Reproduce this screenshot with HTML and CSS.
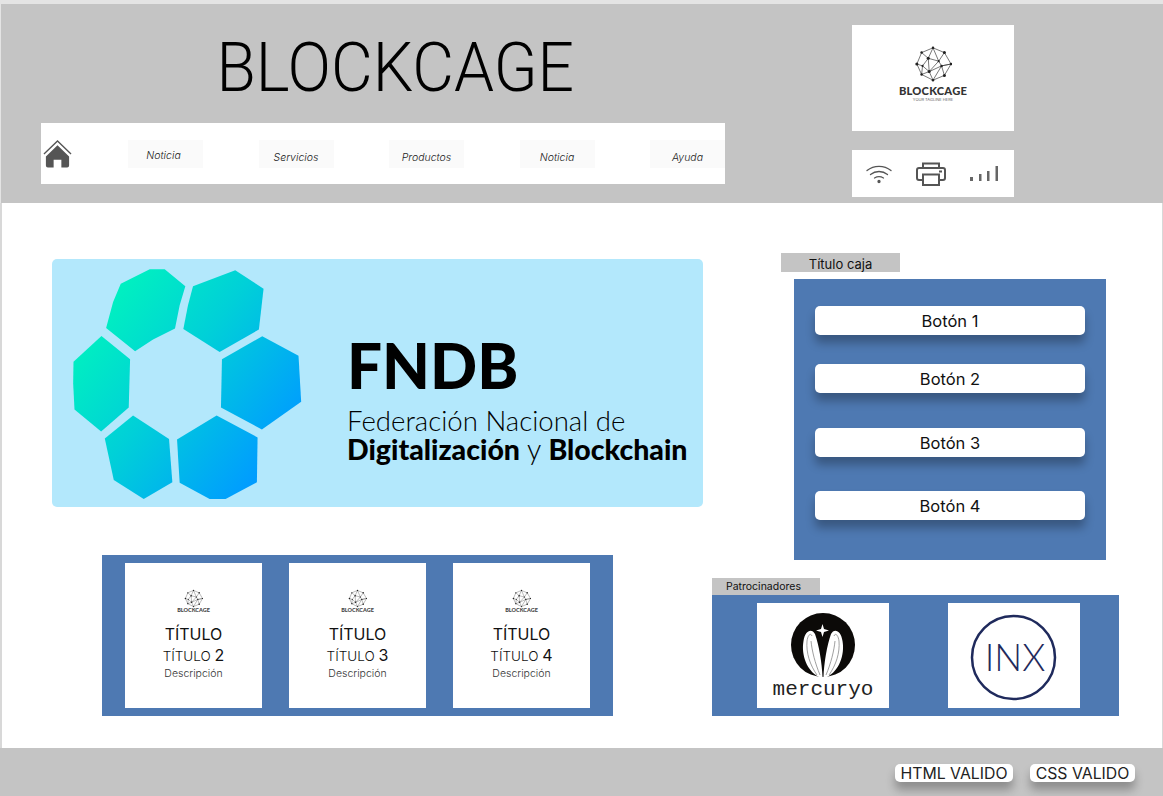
FILE: index.html
```html
<!DOCTYPE html>
<html lang="es">
<head>
    <meta charset="UTF-8">
    <meta name="viewport" content="width=device-width, initial-scale=1.0">
    <title>Blockcage</title>
    <link rel="stylesheet" href="styles.css">
</head>
<body>
    <svg class="defs" width="0" height="0">
        <symbol id="net" viewBox="-20 -20 40 40">
            <g fill="none" stroke="#333" stroke-width=".7">
                <polygon points="0,-17 12,-12 19,0 12,12 0,17 -12,11 -17,0 -12,-12"/>
                <path d="M0-17-5-6 6-3 0-17M12-12 6-3 9 2 19 0M-12-12-5-6-11 2-17 0M-5-6-4 8-11 2-12 11-4 8 0 17 9 2 12 12M6-3-4 8 9 2 19 0"/>
            </g>
            <g fill="#222">
                <circle cx="0" cy="-17" r="1.3"/><circle cx="12" cy="-12" r="1.6"/><circle cx="19" cy="0" r="1.3"/>
                <circle cx="12" cy="12" r="1.6"/><circle cx="0" cy="17" r="1.3"/><circle cx="-12" cy="11" r="1.3"/>
                <circle cx="-17" cy="0" r="1.6"/><circle cx="-12" cy="-12" r="1.3"/><circle cx="-5" cy="-6" r="1.6"/>
                <circle cx="9" cy="2" r="1.3"/><circle cx="-4" cy="8" r="1.6"/><circle cx="-11" cy="2" r="1.1"/>
                <circle cx="6" cy="-3" r="1.1"/>
            </g>
        </symbol>
    </svg>

    <div class="topbar"></div>

    <header class="header">
        <div class="header_left">
            <h1 class="brand"><span>BLOCKCAGE</span></h1>
            <nav class="nav">
                <a class="home" href="#">
                    <svg width="30" height="30" viewBox="0 0 30 30">
                        <path d="M1 15 15 1.5 29 15" fill="none" stroke="#555" stroke-width="1.4"/>
                        <path d="M15 6 27 17.5V27a2 2 0 0 1-2 2H19V21H11V29H5a2 2 0 0 1-2-2V17.5Z" fill="#555"/>
                    </svg>
                </a>
                <a class="nav_item nav_first" href="#">Noticia</a>
                <a class="nav_item" href="#">Servicios</a>
                <a class="nav_item" href="#">Productos</a>
                <a class="nav_item" href="#">Noticia</a>
                <a class="nav_item" href="#">Ayuda</a>
            </nav>
        </div>
        <div class="header_right">
            <div class="logo_box">
                <svg class="logo_big" viewBox="0 0 40 40"><use href="#net"/></svg>
                <div class="logo_name">BLOCKCAGE</div>
                <div class="logo_tag">YOUR TAGLINE HERE</div>
            </div>
            <div class="icons">
                <svg width="26" height="20" viewBox="0 0 26 20" fill="none" stroke="#555" stroke-width="1.3" stroke-linecap="round">
                    <path d="M1 6.5C8 1 18 1 25 6.5"/>
                    <path d="M4.5 10.5C9.5 6.5 16.500 6.500 21.500 10.500"/>
                    <path d="M8.500 14C11 12.500 15 12.500 17.500 14"/>
                    <circle cx="13" cy="17.500" r="1" fill="#555"/>
                </svg>
                <svg width="30" height="24" viewBox="0 0 30 24" fill="none" stroke="#555" stroke-width="2">
                    <path d="M7 6V1.500H23V6"/>
                    <path d="M7 18H3a2 2 0 0 1-2-2V8a2 2 0 0 1 2-2H27a2 2 0 0 1 2 2V16a2 2 0 0 1-2 2H23"/>
                    <path d="M7 12.500H23V23H7Z"/>
                    <path d="M23 9.500H26"/>
                </svg>
                <svg width="28" height="17" viewBox="0 0 28 17" fill="#666">
                    <rect x="0" y="12" width="3" height="4"/>
                    <rect x="9" y="9" width="2.500" height="7"/>
                    <rect x="17" y="6" width="2.500" height="10"/>
                    <rect x="25.500" y="1" width="2.500" height="15"/>
                </svg>
            </div>
        </div>
    </header>

    <main class="main">
        <div class="col_left">
            <section class="hero">
                <svg class="hero_mark" width="230" height="233" viewBox="100 50 690 700">
                    <defs>
                        <linearGradient id="hexgrad" gradientUnits="userSpaceOnUse" x1="150" y1="200" x2="700" y2="620">
                            <stop offset="0" stop-color="#00f2bf"/>
                            <stop offset=".45" stop-color="#00d0d8"/>
                            <stop offset="1" stop-color="#009cff"/>
                        </linearGradient>
                    </defs>
                    <g fill="url(#hexgrad)">
                        <polygon points="243,100 330,57 375,57 437,108 420,165 406,235 340,268 286,303 199,233 220,155"/>
                        <polygon points="460,108 587,60 672,115 658,238 540,305 431,236 445,165"/>
                        <polygon points="668,258 777,317 785,455 667,538 544,472 547,327"/>
                        <polygon points="185,257 271,327 267,472 184,544 104,478 100,400 101,335"/>
                        <polygon points="280,496 388,567 398,697 312,747 222,690 195,565"/>
                        <polygon points="531,496 654,562 652,697 558,747 510,747 420,698 412,568"/>
                    </g>
                </svg>
                <div class="hero_text">
                    <div class="hero_title">FNDB</div>
                    <div class="hero_sub">Federación Nacional de</div>
                    <div class="hero_sub2"><b>Digitalización</b> y <b>Blockchain</b></div>
                </div>
            </section>

            <section class="cards">
                <article class="card">
                    <svg class="logo_small" viewBox="0 0 40 40"><use href="#net"/></svg>
                    <div class="mini_name">BLOCKCAGE</div>
                    <div class="card_title">TÍTULO</div>
                    <div class="card_sub">TÍTULO <span>2</span></div>
                    <div class="card_desc">Descripción</div>
                </article>
                <article class="card">
                    <svg class="logo_small" viewBox="0 0 40 40"><use href="#net"/></svg>
                    <div class="mini_name">BLOCKCAGE</div>
                    <div class="card_title">TÍTULO</div>
                    <div class="card_sub">TÍTULO <span>3</span></div>
                    <div class="card_desc">Descripción</div>
                </article>
                <article class="card">
                    <svg class="logo_small" viewBox="0 0 40 40"><use href="#net"/></svg>
                    <div class="mini_name">BLOCKCAGE</div>
                    <div class="card_title">TÍTULO</div>
                    <div class="card_sub">TÍTULO <span>4</span></div>
                    <div class="card_desc">Descripción</div>
                </article>
            </section>
        </div>

        <aside class="col_right">
            <div class="box_label">Título caja</div>
            <div class="box">
                <button class="btn btn_1">Botón 1</button>
                <button class="btn btn_2">Botón 2</button>
                <button class="btn btn_3">Botón 3</button>
                <button class="btn btn_4">Botón 4</button>
            </div>

            <div class="sponsor_label">Patrocinadores</div>
            <div class="sponsors">
                <div class="sponsor">
                    <svg width="132" height="105" viewBox="0 0 132 105">
                        <circle cx="66" cy="42" r="32" fill="#0c0a08"/>
                        <path d="M62 74C50 68 44 52 46.500 38 48 27 55 25 58 31 62 42 65 60 65.500 74Z" fill="#fff"/>
                        <path d="M70 74C82 68 88 52 85.500 38 84 27 77 25 74 31 70 42 67 60 66.500 74Z" fill="#fff"/>
                        <g fill="none" stroke="#888" stroke-width=".8">
                            <path d="M60 72C53 62 49 50 50 38 51 31 54 30 55 33"/>
                            <path d="M63 72C58 60 55 48 54 38"/>
                            <path d="M72 72C79 62 83 50 82 38 81 31 78 30 77 33"/>
                            <path d="M69 72C74 60 77 48 78 38"/>
                        </g>
                        <path d="M65.500 21 67 26 72 27.500 67 29 65.500 34 64 29 59 27.500 64 26Z" fill="#fff"/>
                        <text class="mercuryo" x="66" y="92" text-anchor="middle">mercuryo</text>
                    </svg>
                </div>
                <div class="sponsor">
                    <svg width="132" height="105" viewBox="0 0 132 105">
                        <circle cx="65.500" cy="54.500" r="41.500" fill="none" stroke="#1f2a5c" stroke-width="2.500"/>
                        <text class="inx" x="67" y="68" text-anchor="middle">INX</text>
                    </svg>
                </div>
            </div>
        </aside>
    </main>

    <footer class="footer">
        <a class="valid" href="#">HTML VALIDO</a>
        <a class="valid valid_css" href="#">CSS VALIDO</a>
    </footer>
</body>
</html>
```

FILE: styles.css
```css
*{
    box-sizing: border-box;
}
body{
    margin: 0;
    height: 796px;
    overflow: hidden;
    background-color: #fff;
    font-family: "Inter", "Liberation Sans", sans-serif;
    color: #111;
}
a{
    color: inherit;
    text-decoration: none;
}
.defs{
    display: block;
}
.topbar{
    height: 4px;
    background-color: #e4e4e4;
}

/* header */
.header{
    height: 199px;
    padding: 21px 0 0 41px;
    display: flex;
    background-color: #c4c4c4;
    border-left: 1px solid #e4e4e4;
}
.header_left{
    width: 684px;
    margin-left: -1px;
}
.brand{
    height: 98px;
    margin: 0;
    padding: 0 0 13px 25px;
    display: flex;
    align-items: center;
    justify-content: center;
    font-family: "Roboto", sans-serif;
    font-size: 69px;
    font-weight: 300;
    line-height: 1;
    color: #000;
}
.brand span{
    display: inline-block;
    transform: scaleX(.93);
}
.nav{
    height: 61px;
    padding: 0 0 0 2px;
    display: flex;
    align-items: center;
    background-color: #fff;
}
.home{
    display: flex;
    width: 29px;
    margin-right: 56px;
}
.nav_item{
    width: 75px;
    height: 28px;
    margin-right: 55.500px;
    padding-top: 8px;
    display: flex;
    align-items: center;
    justify-content: center;
    background-color: #fafafa;
    font-size: 10.500px;
    font-style: italic;
    font-weight: 300;
    color: #222;
}
.nav_item:last-child{
    margin-right: 0;
}
.nav_first{
    padding: 4px 4px 0 0;
}
.header_right{
    width: 162px;
    margin-left: 127px;
}
.logo_box{
    height: 106px;
    padding-top: 20px;
    display: flex;
    flex-direction: column;
    align-items: center;
    background-color: #fff;
}
.logo_big{
    width: 38px;
    height: 38px;
}
.logo_name{
    margin-top: 1px;
    font-family: "Lato", sans-serif;
    font-size: 11.200px;
    font-weight: 900;
    letter-spacing: .2px;
    line-height: 13px;
    color: #333;
}
.logo_tag{
    font-size: 4px;
    line-height: 6px;
    color: #666;
}
.icons{
    height: 47px;
    margin-top: 19px;
    padding: 0 16px 0 14px;
    display: flex;
    align-items: center;
    justify-content: space-between;
    background-color: #fff;
}

/* main */
.main{
    height: 545px;
    padding: 50px 0 32px 50px;
    display: flex;
    border-left: 2px solid #d8d8d8;
    border-right: 1px solid #d8d8d8;
}
.col_left{
    width: 651px;
    padding-top: 6px;
}
.hero{
    height: 248px;
    padding-left: 21px;
    display: flex;
    align-items: center;
    background-color: #b3e8fc;
    border-radius: 5px;
}
.hero_mark{
    flex: none;
}
.hero_text{
    margin: 32px 0 0 44px;
    font-family: "Lato", sans-serif;
    color: #000;
}
.hero_title{
    font-size: 62px;
    font-weight: 900;
    line-height: 60px;
    margin-bottom: 12px;
}
.hero_sub{
    font-size: 27.600px;
    font-weight: 300;
    line-height: 28px;
}
.hero_sub2{
    font-size: 28.500px;
    font-weight: 300;
    line-height: 28px;
}
.hero_sub2 b{
    font-weight: 900;
}
.cards{
    width: 511px;
    height: 161px;
    margin: 48px 0 0 50px;
    padding: 8px 23px;
    display: flex;
    gap: 27px;
    background-color: #4e79b2;
}
.card{
    width: 137px;
    padding-top: 26px;
    display: flex;
    flex-direction: column;
    align-items: center;
    background-color: #fff;
}
.logo_small{
    width: 19px;
    height: 19px;
}
.mini_name{
    font-family: "Lato", sans-serif;
    font-size: 5.500px;
    font-weight: 900;
    line-height: 4px;
    color: #444;
}
.card_title{
    margin-top: 12px;
    font-size: 16px;
    line-height: 20px;
}
.card_sub{
    font-size: 13.500px;
    font-weight: 300;
    line-height: 22px;
}
.card_sub span{
    font-size: 16px;
    font-weight: 400;
}
.card_desc{
    font-size: 10.500px;
    font-weight: 300;
    line-height: 14px;
    color: #333;
}

/* right column */
.col_right{
    width: 407px;
    margin-left: 9px;
}
.box_label{
    width: 119px;
    height: 19px;
    margin-left: 69px;
    background-color: #c4c4c4;
    font-size: 13px;
    line-height: 23px;
    text-align: center;
}
.box{
    width: 312px;
    height: 281px;
    margin: 7px 0 0 82px;
    padding: 27px 21px 0;
    background-color: #4e79b2;
}
.btn{
    display: block;
    width: 270px;
    height: 29px;
    padding: 1px 0 0;
    background-color: #fff;
    border: none;
    border-radius: 5px;
    box-shadow: 0 8px 10px rgba(0, 0, 0, .28);
    font-family: inherit;
    font-size: 16.500px;
    color: #111;
}
.btn_2{
    margin-top: 29px;
}
.btn_3{
    margin-top: 35px;
}
.btn_4{
    margin-top: 34px;
}
.sponsor_label{
    width: 108px;
    height: 17px;
    margin-top: 18px;
    padding-left: 14px;
    background-color: #c4c4c4;
    font-size: 10.500px;
    line-height: 17px;
}
.sponsors{
    width: 407px;
    height: 121px;
    padding: 8px 39px 8px 45px;
    display: flex;
    justify-content: space-between;
    background-color: #4e79b2;
}
.sponsor{
    width: 132px;
    height: 105px;
    background-color: #fff;
}
.sponsor svg{
    display: block;
}
.mercuryo{
    font-family: "Liberation Mono", monospace;
    font-size: 21px;
    fill: #222;
}
.inx{
    font-family: "Lato", sans-serif;
    font-size: 37px;
    font-weight: 300;
    fill: #1f2a5c;
}

/* footer */
.footer{
    height: 48px;
    padding: 16px 28px 0 0;
    display: flex;
    justify-content: flex-end;
    align-items: flex-start;
    background-color: #c4c4c4;
}
.valid{
    width: 118px;
    height: 18px;
    display: flex;
    align-items: center;
    justify-content: center;
    background-color: #fff;
    border-radius: 5px;
    box-shadow: 0 8px 10px rgba(0, 0, 0, .28);
    font-size: 15.800px;
    color: #222;
}
.valid_css{
    width: 105px;
    margin-left: 17px;
}
```
